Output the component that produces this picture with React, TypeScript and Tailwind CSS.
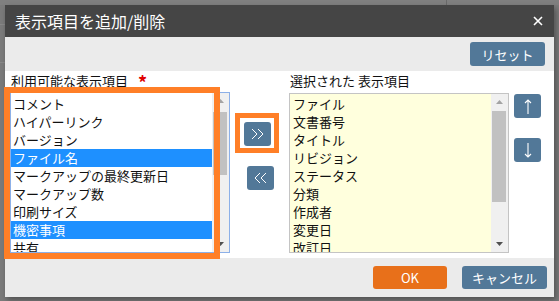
import React from 'react';

const FONT = '"Noto Sans CJK JP", "Liberation Sans", sans-serif';

const AVAILABLE = [
  { label: 'コメント' },
  { label: 'ハイパーリンク' },
  { label: 'バージョン' },
  { label: 'ファイル名', selected: true },
  { label: 'マークアップの最終更新日' },
  { label: 'マークアップ数' },
  { label: '印刷サイズ' },
  { label: '機密事項', selected: true },
  { label: '共有' },
];

const CHOSEN = ['ファイル', '文書番号', 'タイトル', 'リビジョン', 'ステータス', '分類', '作成者', '変更日', '改訂日'];

function Scrollbar({ thumbTop, thumbHeight }: { thumbTop: number; thumbHeight: number }) {
  return (
    <div className="relative w-[17px] h-full bg-[#f0f0f0] shrink-0">
      <svg className="absolute left-[5px] top-[6px]" width="7" height="4" viewBox="0 0 7 4">
        <path d="M0 4 L3.5 0 L7 4 Z" fill="#a3a3a3" />
      </svg>
      <div className="absolute left-[1px] w-[14px] bg-[#c1c1c1]" style={{ top: thumbTop, height: thumbHeight }} />
      <svg className="absolute left-[5px] bottom-[6px]" width="7" height="4" viewBox="0 0 7 4">
        <path d="M0 0 L3.5 4 L7 0 Z" fill="#505050" />
      </svg>
    </div>
  );
}

function SquareButton({ children, className = '' }: { children: React.ReactNode; className?: string }) {
  return (
    <button className={`w-[27px] h-[24px] rounded-[3px] bg-[#527898] flex items-center justify-center ${className}`}>
      {children}
    </button>
  );
}

function Chevrons({ dir }: { dir: 'right' | 'left' }) {
  const d = dir === 'right' ? 'M1 1 L6 6 L1 11 M7 1 L12 6 L7 11' : 'M6 1 L1 6 L6 11 M12 1 L7 6 L12 11';
  return (
    <svg width="13" height="12" viewBox="0 0 13 12">
      <path d={d} fill="none" stroke="white" strokeWidth="1" />
    </svg>
  );
}

function Arrow({ dir }: { dir: 'up' | 'down' }) {
  const d = dir === 'up' ? 'M4 1 L4 15 M1 4 L4 1 L7 4' : 'M4 0 L4 14 M1 11 L4 14 L7 11';
  return (
    <svg width="8" height="15" viewBox="0 0 8 15">
      <path d={d} fill="none" stroke="white" strokeWidth="1.1" />
    </svg>
  );
}

export default function App() {
  return (
    <div className="relative w-[559px] h-[301px] overflow-hidden bg-[#7b7b7b] pl-[5px] pt-[5px]" style={{ fontFamily: FONT }}>
      {/* backdrop page */}
      <div className="absolute left-[0px] top-[0px] w-[559px] h-[5px] bg-[#808080]" />
      <div className="absolute left-[446px] top-[0px] w-[1px] h-[5px] bg-[#6a6a6a]" />
      <div className="absolute left-[0px] top-[24px] w-[5px] h-[1px] bg-[#888888]" />
      <div className="absolute left-[0px] top-[62px] w-[5px] h-[1px] bg-[#888888]" />

      <div className="relative w-[549px] h-[292px] flex flex-col shadow-[2px_3px_6px_rgba(0,0,0,0.35)]">
        <div className="h-[32px] bg-[#454545] flex items-center justify-between pl-[10px] pr-[11px]">
          <span className="text-white text-[16px] leading-[20px]">表示項目を追加/削除</span>
          <svg width="10" height="10" viewBox="0 0 10 10">
            <path d="M1 1 L9 9 M9 1 L1 9" stroke="white" strokeWidth="1.6" />
          </svg>
        </div>

        <div className="h-[34px] bg-[#ebebeb] flex items-center justify-end pr-[9px]">
          <button className="w-[75px] h-[24px] rounded-[3px] bg-[#527898] text-white text-[13px] leading-none">リセット</button>
        </div>

        <div className="h-[187px] bg-white flex pl-[5px] text-[13px] text-[#111]">
          <div className="w-[220px] flex flex-col">
            <div className="h-[21px] leading-[20px] pl-[1px] whitespace-nowrap flex items-start">
              利用可能な表示項目
              <span className="ml-[10px] text-[#e00000] text-[18px] leading-[22px] font-bold">*</span>
            </div>
            <div className="h-[161px] border border-[#8cb0e8] flex">
              <div className="flex-1 pt-[2px] overflow-hidden">
                {AVAILABLE.map((it) => (
                  <div
                    key={it.label}
                    className={`h-[18px] leading-[18px] pl-[2px] whitespace-nowrap ${it.selected ? 'bg-[#1e90ff] text-white' : ''}`}
                  >
                    {it.label}
                  </div>
                ))}
              </div>
              <Scrollbar thumbTop={19} thumbHeight={63} />
            </div>
          </div>

          <div className="ml-[14px] w-[30px] pt-[51px] flex flex-col">
            <SquareButton>
              <Chevrons dir="right" />
            </SquareButton>
            <SquareButton className="mt-[20px] ml-[3px]">
              <Chevrons dir="left" />
            </SquareButton>
          </div>

          <div className="ml-[15px] w-[220px] flex flex-col">
            <div className="h-[22px] leading-[20px] pl-[1px] whitespace-nowrap">選択された 表示項目</div>
            <div className="h-[160px] border border-[#c4c4c4] bg-[#ffffdd] flex">
              <div className="flex-1 pt-[1px] overflow-hidden">
                {CHOSEN.map((t) => (
                  <div key={t} className="h-[18px] leading-[18px] pl-[3px] whitespace-nowrap">
                    {t}
                  </div>
                ))}
              </div>
              <Scrollbar thumbTop={17} thumbHeight={91} />
            </div>
          </div>

          <div className="ml-[5px] pt-[23px] flex flex-col">
            <SquareButton>
              <Arrow dir="up" />
            </SquareButton>
            <SquareButton className="mt-[20px]">
              <Arrow dir="down" />
            </SquareButton>
          </div>
        </div>

        <div className="flex-1 bg-[#ebebeb] flex items-start justify-end pt-[8px] pr-[7px] gap-[15px]">
          <button className="w-[74px] h-[23px] rounded-[3px] bg-[#e8701a] text-white text-[13px] leading-none">OK</button>
          <button className="w-[85px] h-[23px] rounded-[3px] bg-[#527898] text-white text-[13px] leading-none">キャンセル</button>
        </div>
      </div>

      {/* annotation highlights */}
      <div className="absolute left-[4px] top-[87px] w-[216px] h-[172px] border-[6px] border-[#ff7f27]" />
      <div className="absolute left-[235px] top-[113px] w-[44px] h-[40px] border-[5px] border-[#ff7f27]" />
    </div>
  );
}
